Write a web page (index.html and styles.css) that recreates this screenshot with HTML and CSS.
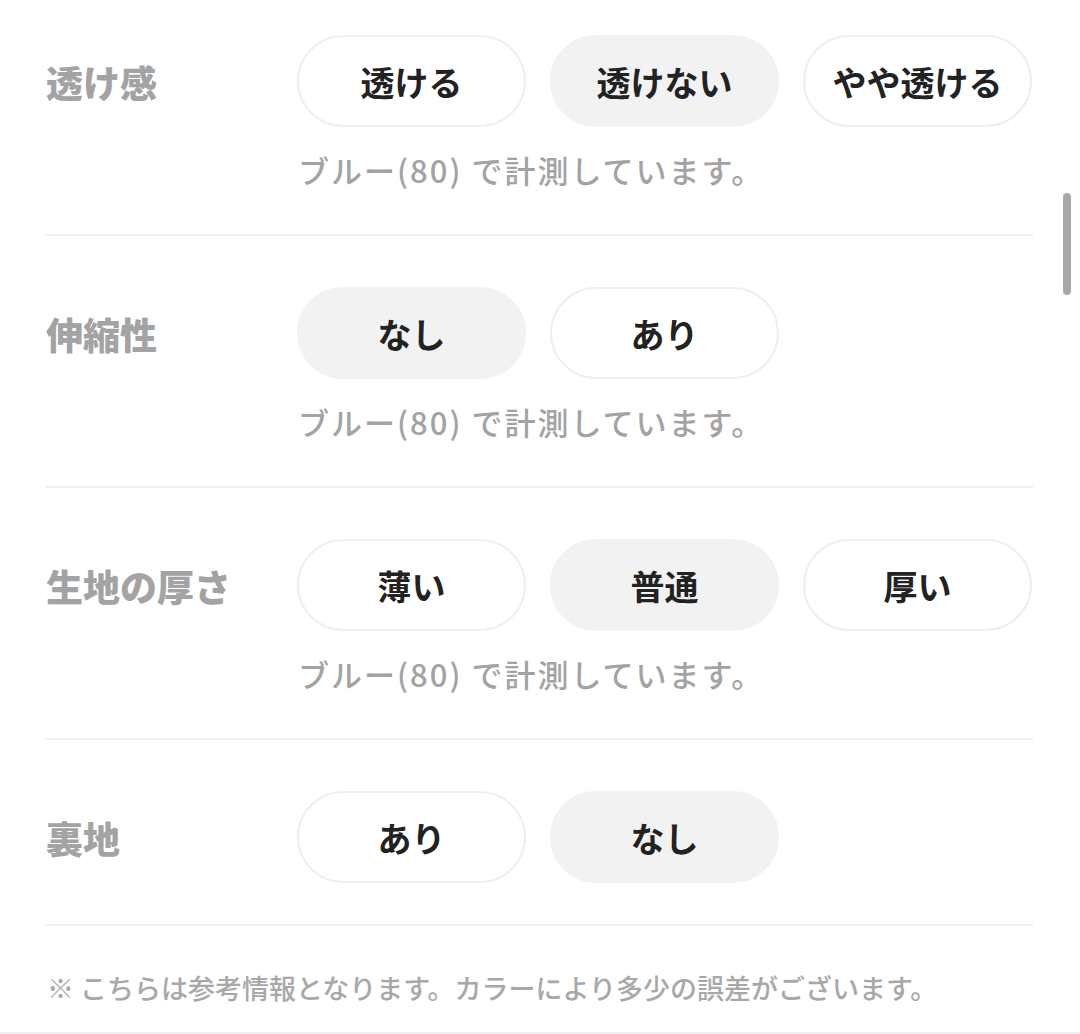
FILE: index.html
```html
<!DOCTYPE html>
<html>
  <head>
    <title>素材情報</title>
    <link rel="stylesheet" href="styles.css">
  </head>
  <body>
    <div class="sheet">
      <div class="row first">
        <div class="label">透け感</div>
        <div class="body">
          <div class="pills">
            <div class="pill">透ける</div>
            <div class="pill active">透けない</div>
            <div class="pill">やや透ける</div>
          </div>
          <p class="note">ブルー(80) で計測しています。</p>
        </div>
      </div>

      <div class="row">
        <div class="label">伸縮性</div>
        <div class="body">
          <div class="pills">
            <div class="pill active">なし</div>
            <div class="pill">あり</div>
          </div>
          <p class="note">ブルー(80) で計測しています。</p>
        </div>
      </div>

      <div class="row">
        <div class="label">生地の厚さ</div>
        <div class="body">
          <div class="pills">
            <div class="pill">薄い</div>
            <div class="pill active">普通</div>
            <div class="pill">厚い</div>
          </div>
          <p class="note">ブルー(80) で計測しています。</p>
        </div>
      </div>

      <div class="row last">
        <div class="label">裏地</div>
        <div class="body">
          <div class="pills">
            <div class="pill">あり</div>
            <div class="pill active">なし</div>
          </div>
        </div>
      </div>

      <p class="footer">※ こちらは参考情報となります。カラーにより多少の誤差がございます。</p>
    </div>
    <div class="scrollbar"></div>
  </body>
</html>
```

FILE: styles.css
```css
html, body {
  margin: 0;
  padding: 0;
  background: #fff;
  height: 1034px;
  overflow: hidden;
}
body {
  font-family: "Noto Sans CJK JP", "Noto Sans", sans-serif;
  color: #222;
}
.sheet {
  padding: 0 47px 0 46px;
  border-bottom: 2px solid #efefef;
  height: 1032px;
}
.row {
  display: flex;
  align-items: flex-start;
  padding: 51px 0 44px;
  border-bottom: 2px solid #f0f0f0;
}
.row.first {
  padding-top: 35px;
}
.row.last {
  padding-bottom: 40px;
}
.label {
  width: 251px;
  flex-shrink: 0;
  padding-top: 1px;
  line-height: 92px;
  font-size: 37px;
  font-weight: 900;
  color: #a3a3a3;
}
.body {
  flex: 1;
}
.pills {
  display: flex;
  gap: 24px;
}
.pill {
  width: 229px;
  height: 92px;
  box-sizing: border-box;
  border: 2px solid #efefef;
  border-radius: 46px;
  display: flex;
  align-items: center;
  justify-content: center;
  font-size: 34px;
  font-weight: 700;
  color: #222;
}
.pill.active {
  background: #f2f2f2;
  border-color: #f2f2f2;
}
.note {
  margin: 23px 0 0 1px;
  font-size: 31px;
  line-height: 40px;
  font-weight: 500;
  letter-spacing: 2px;
  color: #a3a3a3;
}
.footer {
  margin: 44px 0 0 1px;
  font-size: 27px;
  line-height: 36px;
  font-weight: 500;
  color: #a8a8a8;
}
.scrollbar {
  position: absolute;
  left: 1063px;
  top: 193px;
  width: 8px;
  height: 102px;
  border-radius: 4px;
  background: #a8a8a8;
}
```
